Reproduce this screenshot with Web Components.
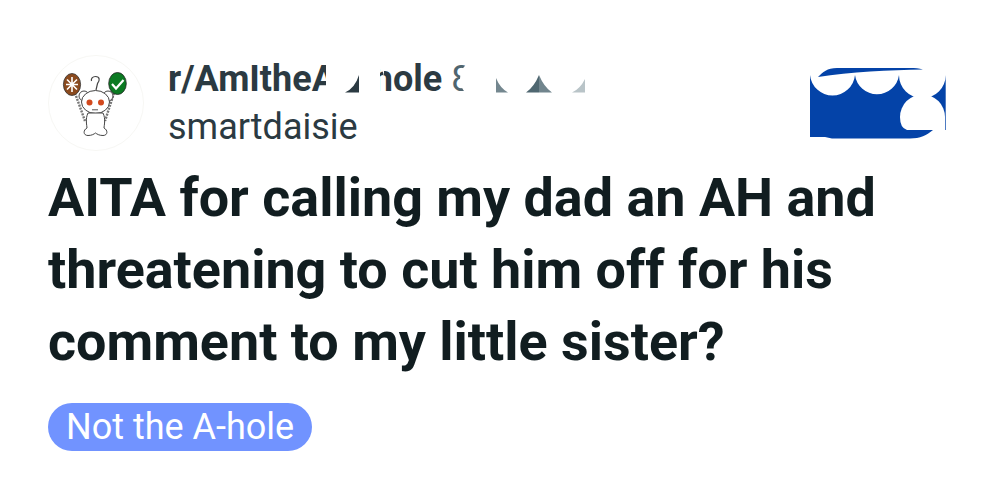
<!DOCTYPE html>
<html><head><meta charset="utf-8">
<style>html,body{margin:0;background:#fff}</style>
</head><body>
<template id="t-avatar"><style>:host{display:block;width:96px;height:96px;flex:none}svg{display:block}</style>
<svg width="96" height="96" viewBox="0 0 96 96">
<circle cx="48" cy="48" r="47.500" fill="#fff" stroke="#f7f7f4"/>
<g stroke="#777" stroke-width="2.400" stroke-dasharray="2 1.100" fill="none"><path d="M27 38L37 66"/><path d="M66 38L57 66"/></g>
<ellipse cx="24" cy="29.500" rx="8.600" ry="11" fill="#8a4a1e" stroke="#333" stroke-width=".8"/>
<path d="M24 22V37M19 24.500L29 34.500M29 24.500L19 34.500M18 29.500H30" stroke="#fff" stroke-width="1.600"/>
<ellipse cx="69.500" cy="28.500" rx="8.800" ry="11" fill="#0b7a22" stroke="#222" stroke-width=".8"/>
<path d="M64 29L68 33.500L75.500 25" stroke="#fff" stroke-width="2.200" fill="none"/>
<path d="M48 35L49.500 28.500C52 25.500 52 21.500 47.500 21.500C44.500 21.500 42.800 23.500 43.500 26" stroke="#444" stroke-width="1.200" fill="none"/>
<circle cx="36" cy="41" r="5" fill="#fff" stroke="#444"/><circle cx="60" cy="41" r="5" fill="#fff" stroke="#444"/>
<ellipse cx="47.500" cy="47" rx="14" ry="11.500" fill="#fff" stroke="#444" stroke-width="1"/>
<circle cx="41.500" cy="47.500" r="3" fill="#d2491e"/><circle cx="53" cy="47.500" r="3" fill="#d2491e"/>
<path d="M44 54.800H50" stroke="#555" fill="none"/>
<path d="M40 58C37 64 39 71 39 73C35 75 35 80.500 40 80.500C44 80.500 46 79 47.500 78C49 79 51 80.500 55 80.500C60 80.500 60 75 56 73C56 71 58 64 55 58Z" fill="#fff" stroke="#444" stroke-width="1"/>
</svg></template>
<template id="t-sub"><style>:host{display:flex;flex-direction:column;font-family:Roboto,sans-serif;color:#2b3a42;position:relative}
.a{font-size:36px;font-weight:700;line-height:48px;white-space:nowrap}.b{font-size:36px;line-height:48px}
.e{font-weight:400;margin-left:9px;color:#4f6570}
svg{position:absolute;left:0;top:0;overflow:visible}</style>
<div class="a">r/AmItheAsshole<span class="e">8</span></div><div class="b"><slot></slot></div>
<svg width="420" height="48" viewBox="0 0 420 48">
<path fill="#fff" d="M158 0H216V20H215.500Q215.500 16 212 14V40H158Z"/>
<path fill="#2b3a42" d="M177 37.500Q187 33 191 20V37.500Z"/>
<circle cx="312" cy="24" r="20" fill="#fff"/>
<path fill="#fff" d="M292 0H420V40H312V4H292Z"/>
<path d="M328 23Q332 33 340 37.500H328Z" fill="#74878f"/>
<path d="M371 20Q366 32 358 37.500H371Z" fill="#4f6771"/><path d="M371 20Q376 32 384 37.500H371Z" fill="#71858d"/>
<path d="M417 24Q412 34 404 37.500H417Z" fill="#b9c4c8"/>
</svg></template>
<template id="t-pill"><style>:host{display:inline-block;background:#7193ff;color:#fff;border-radius:24px;font:400 36px/48px Roboto,sans-serif;padding:0 18px}</style><slot></slot></template>
<template id="t-join"><style>:host{display:block;width:136px;height:72px;flex:none}svg{display:block;overflow:visible}</style>
<svg width="136" height="72" viewBox="0 0 136 72"><path fill="#0443a8" d="M8 10C13 5 17 1 27 1H100C105 1 109 1 113 2.500C80 3 40 5 8 10ZM0 8A22.600 22.600 0 0 0 45 8A22.200 22.200 0 0 0 89 8A23 23 0 0 0 135.700 8V63H123C117 68 110 71.500 100 71.500H22L15 70H0Z"/><path fill="#fff" d="M90 50A22.500 22.500 0 0 1 135 50V63H97Q90 61 90 50Z"/></svg></template>
<template id="t-post"><style>:host{display:block;padding:55px 39px 0 48px;height:423px}
.h{display:flex;align-items:flex-start;gap:24px}.g{flex:1}
.j{margin-top:12px}
h1{margin:11px 0 0;font:700 53.900px/72px Roboto,sans-serif;color:#111d20}
.f{margin-top:25px}</style>
<div class="h"><r-avatar></r-avatar><r-sub class="g">smartdaisie</r-sub><r-join class="j"></r-join></div>
<h1>AITA for calling my dad an AH and<br>threatening to cut him off for his<br>comment to my little sister?</h1>
<div class="f"><r-pill>Not the A-hole</r-pill></div></template>
<r-post></r-post>
<script>
for(const [n,t] of [['r-avatar','t-avatar'],['r-sub','t-sub'],['r-pill','t-pill'],['r-join','t-join'],['r-post','t-post']]){
customElements.define(n,class extends HTMLElement{constructor(){super();this.attachShadow({mode:'open'}).appendChild(document.getElementById(t).content.cloneNode(true))}});
}
</script>
</body></html>
